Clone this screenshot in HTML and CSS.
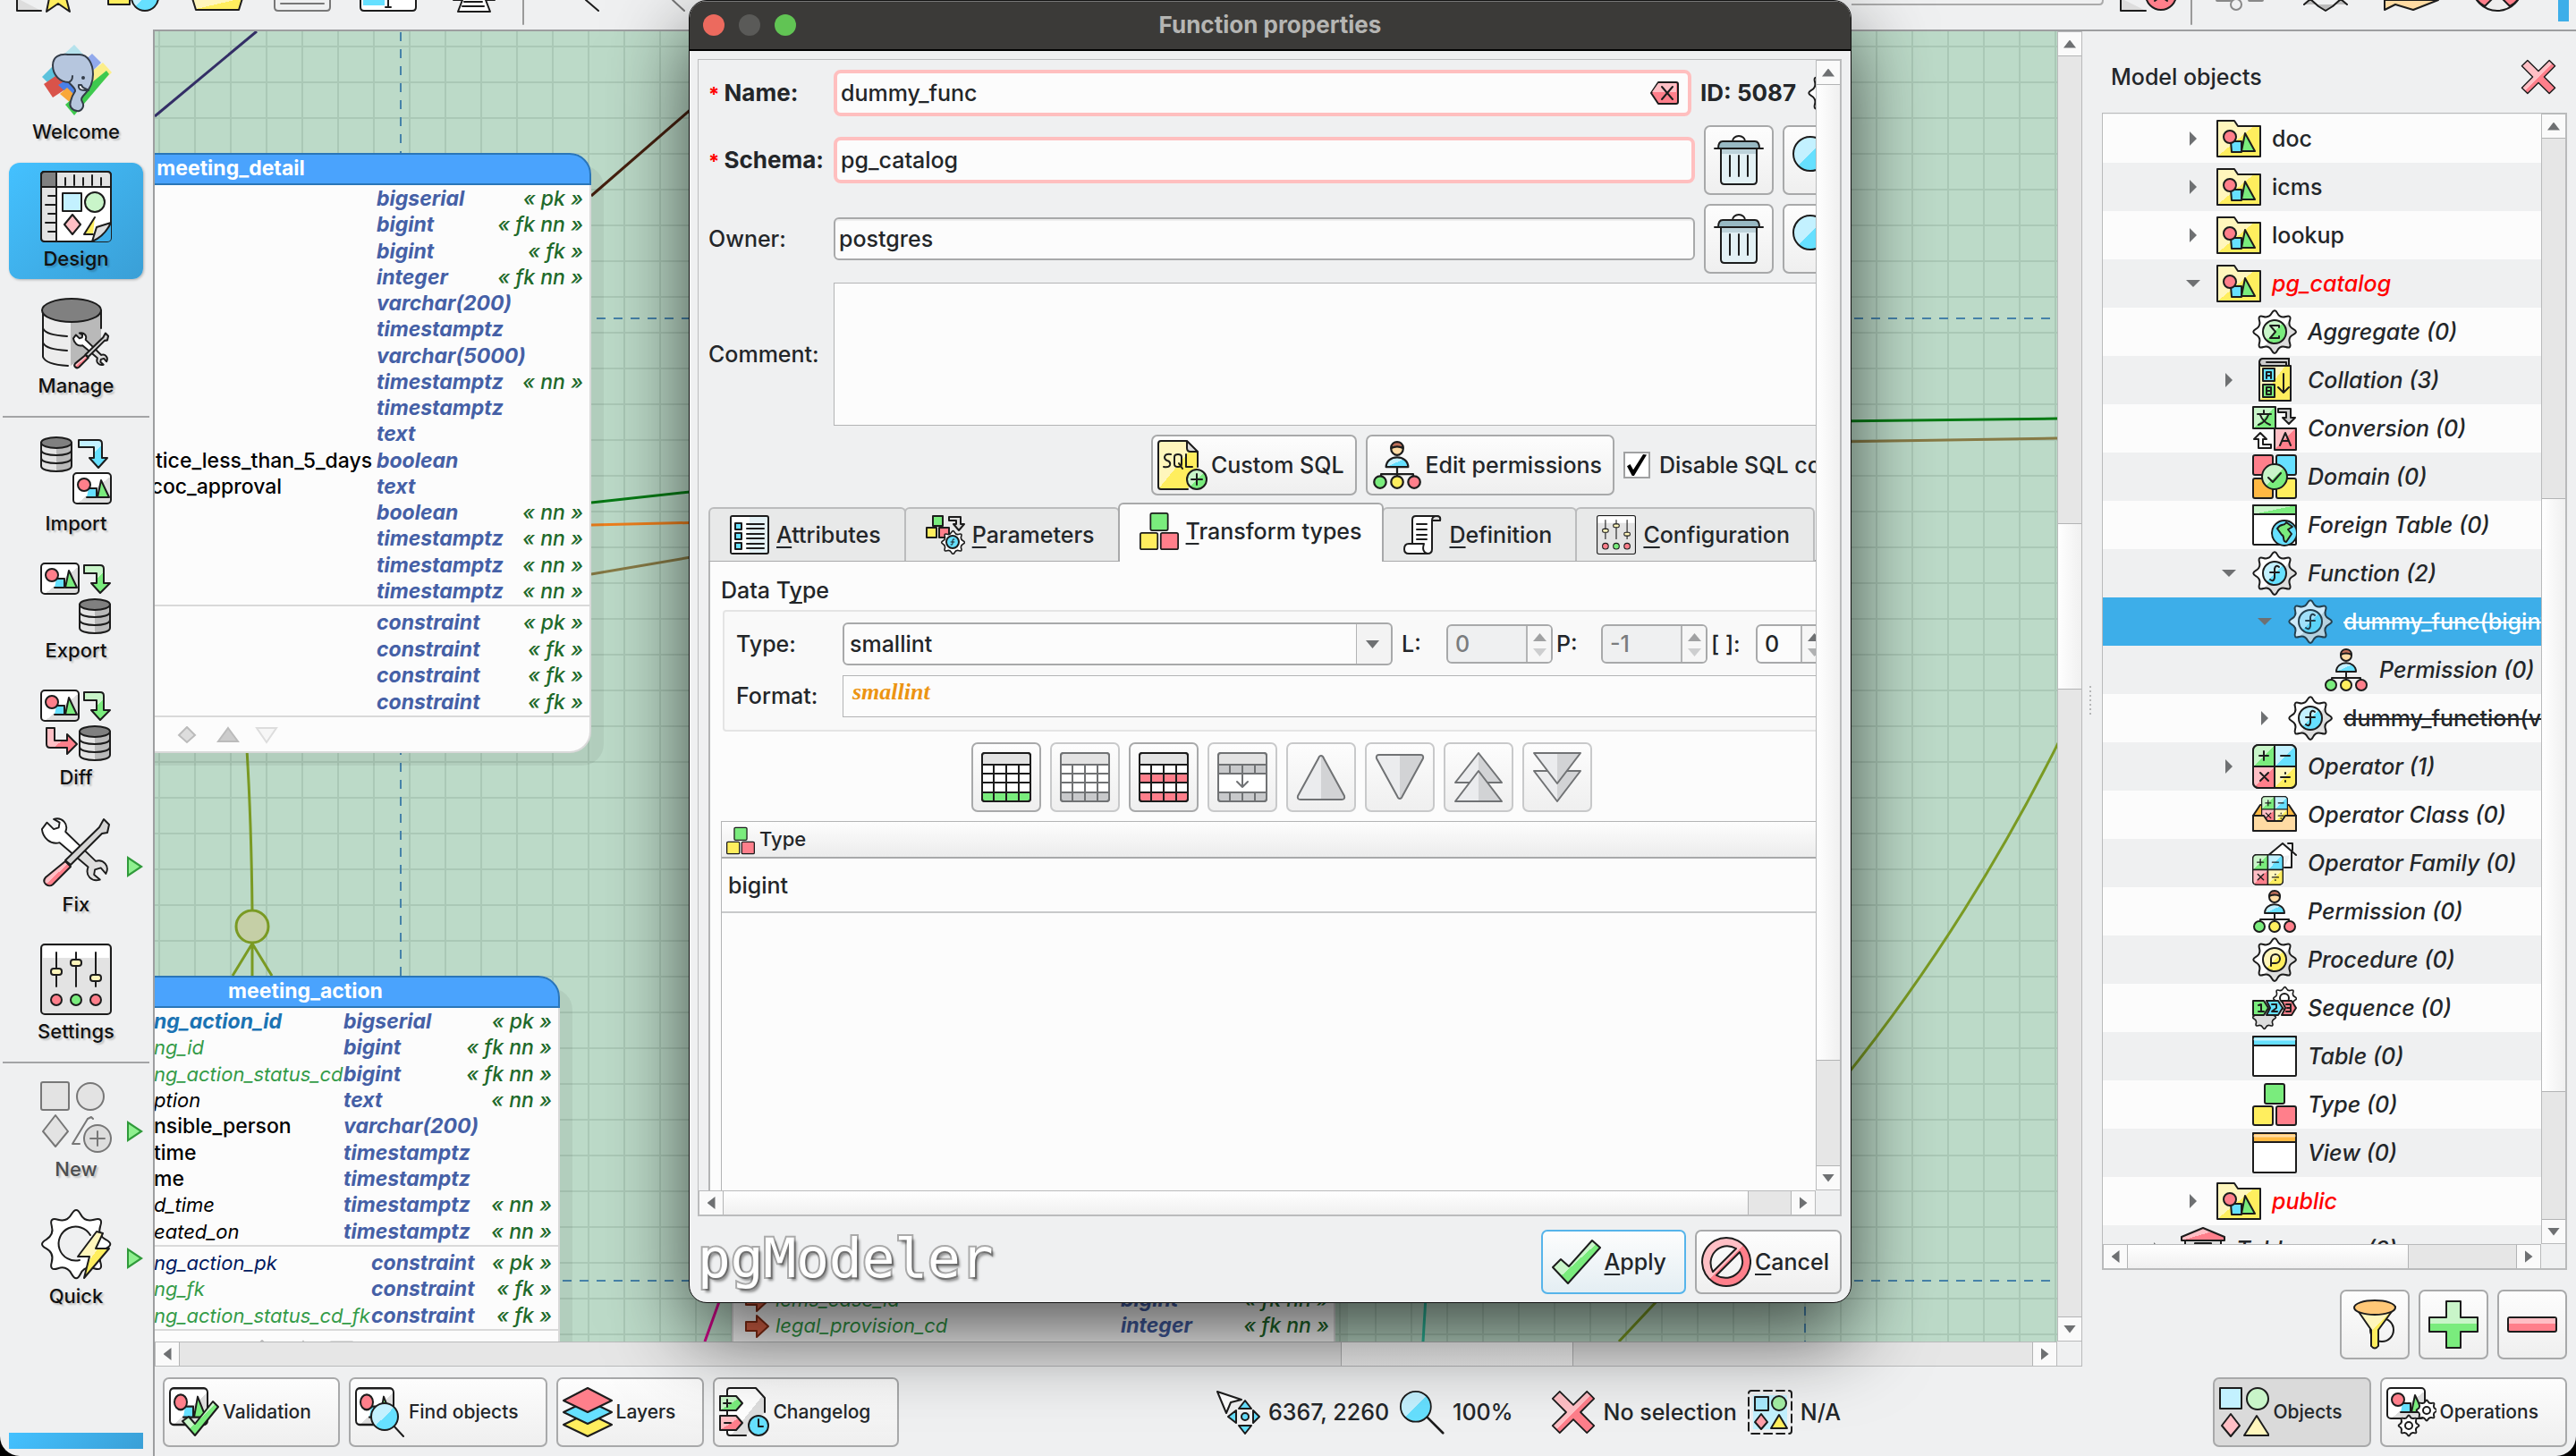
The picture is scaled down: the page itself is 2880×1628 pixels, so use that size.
FILE: index.html
```html
<!DOCTYPE html>
<html lang="en">
<head>
<meta charset="utf-8">
<title>pgModeler</title>
<link rel="stylesheet" href="styles.css">
</head>
<body>
<svg class="defs" aria-hidden="true">
  <defs>
    <linearGradient id="gG" x1="0" y1="0" x2="1" y2="1"><stop offset=".5" stop-color="#c9f5c9"/><stop offset=".5" stop-color="#7aec7d"/></linearGradient>
    <linearGradient id="gR" x1="0" y1="0" x2="1" y2="1"><stop offset=".5" stop-color="#ffbfc5"/><stop offset=".5" stop-color="#ff7f8b"/></linearGradient>
    <linearGradient id="gB" x1="0" y1="0" x2="1" y2="1"><stop offset=".5" stop-color="#c3f1ff"/><stop offset=".5" stop-color="#66e0ff"/></linearGradient>
    <linearGradient id="gY" x1="0" y1="0" x2="1" y2="1"><stop offset=".5" stop-color="#fff6bc"/><stop offset=".5" stop-color="#ffee5e"/></linearGradient>
    <linearGradient id="gW" x1="0" y1="0" x2="1" y2="1"><stop offset=".55" stop-color="#fff"/><stop offset=".55" stop-color="#dedede"/></linearGradient>
    <linearGradient id="gN" x1="0" y1="0" x2="1" y2="0"><stop offset=".5" stop-color="#ebecee"/><stop offset=".5" stop-color="#d2d3d5"/></linearGradient>
    <linearGradient id="gD" x1="0" y1="0" x2="1" y2="0"><stop offset=".5" stop-color="#e3e3e3"/><stop offset=".5" stop-color="#b9b9b9"/></linearGradient>

    <g id="card">
      <rect x="1" y="1" width="42" height="34" rx="4" fill="url(#gW)"/>
      <path d="M18 18h9v10h-11" fill="#66e0ff"/>
      <path d="M32 9l9 19h-13z" fill="#7aec7d"/>
      <circle cx="13" cy="14" r="7" fill="#ff7f8b"/>
    </g>
    <g id="cyl">
      <path d="M1 8v26c0 4 8 6 17 6s17-2 17-6V8z" fill="url(#gD)"/>
      <path d="M1 16c0 4 8 6 17 6s17-2 17-6M1 25c0 4 8 6 17 6s17-2 17-6"/>
      <ellipse cx="18" cy="8" rx="17" ry="6" fill="#808080"/>
    </g>
    <path id="gear" d="M45.9 28.1Q39.8 31.1 42 37.6T37.6 42 28.1 45.9 21.9 45.9 12.4 42 8 37.6 4.1 28.1 4.1 21.9 8 12.4 12.4 8 21.9 4.1 28.1 4.1 37.6 8 42 12.4 45.9 21.9 45.9 28.1Z"/>
    <g id="perm">
      <path d="M25 28v5M9 38v-4h32v4M25 33v5"/>
      <circle cx="25" cy="9" r="6" fill="#ffdba3"/><path d="M19 8c0-8 12-8 12 0q-6-3-12 0z" fill="#c0705a"/>
      <path d="M14 27c0-13 22-13 22 0z" fill="url(#gB)"/>
      <circle cx="8" cy="42" r="6" fill="#7aec7d"/><circle cx="25" cy="42" r="6" fill="#ffee5e"/><circle cx="42" cy="42" r="6" fill="#ff7f8b"/>
    </g>
    <g id="calc">
      <rect x="1" y="1" width="48" height="48" rx="6" fill="#fff"/>
      <path d="M25 1H7a6 6 0 0 0-6 6v18h24z" fill="url(#gG)"/><path d="M25 1h18a6 6 0 0 1 6 6v18H25z" fill="url(#gB)"/>
      <path d="M25 49H7a6 6 0 0 1-6-6V25h24z" fill="url(#gR)"/><path d="M25 49h18a6 6 0 0 0 6-6V25H25z" fill="url(#gY)"/>
      <path d="M8 13h10M13 8v10M32 13h10M9 32l9 9M18 32l-9 9M32 37h10M37 32v1M37 41v1"/>
    </g>
    <g id="tools">
      <path d="M8 6l8 8 6-2 1-6-7-4c10-3 18 6 14 15l36 35c9-3 17 6 12 15l-6-7-7 2-1 6 7 6c-10 3-18-5-14-15L23 30C12 33 3 24 2 14z" transform="translate(0 1) scale(.94)" fill="url(#gW)"/>
      <path d="M66 12l5-9 6 6-2 9-6 1-35 35-6-5z" fill="#d5d5d5"/>
      <path d="M28 50l6 6-20 20c-5 4-13-2-8-8z" fill="url(#gR)"/>
    </g>
    <g id="tgrid">
      <rect x="1" y="1" width="54" height="54" rx="3" fill="#fff"/>
      <path d="M1 4a3 3 0 0 1 3-3h48a3 3 0 0 1 3 3v10H1z" fill="#e3e3e3"/>
    </g>
  </defs>

  <symbol id="i-folder" viewBox="0 0 50 50"><path d="M1 5h19l4 6h25v34H1z" fill="url(#gY)"/><path d="M16 28h12v12H17z" fill="#66e0ff"/><path d="M32 19l11 20H28z" fill="#7aec7d"/><circle cx="15" cy="23" r="7" fill="#ff7f8b"/></symbol>
  <symbol id="i-agg" viewBox="0 0 50 50"><use href="#gear" fill="url(#gW)"/><circle cx="25" cy="25" r="13" fill="url(#gG)"/><path d="M30 20v-2H20l6 7-6 7h10v-2"/></symbol>
  <symbol id="i-func" viewBox="0 0 50 50"><use href="#gear" fill="url(#gW)"/><circle cx="25" cy="25" r="13" fill="url(#gB)"/><path d="M30 18q-4-3-5 2v10q-1 5-5 2M20 24h10"/></symbol>
  <symbol id="i-proc" viewBox="0 0 50 50"><use href="#gear" fill="url(#gW)"/><circle cx="25" cy="25" r="13" fill="url(#gY)"/><path d="M21 32v-8a5 5 0 1 1 5 5h-4"/></symbol>
  <symbol id="i-coll" viewBox="0 0 50 50"><path d="M8 6c0-3 1-5 4-5h29v8h2v39H8z" fill="url(#gY)"/><path d="M8 6c0-3 1-5 4-5h29v8H10z" fill="#ccc"/><path d="M16 5h22v4"/><rect x="12" y="12" width="13" height="14" fill="#66e0ff"/><rect x="12" y="30" width="13" height="14" fill="#7aec7d"/><path d="M16 23v-7h5v7M16 20h5M16 33h5v4h-5zM16 37h5v4h-5z"/><path d="M35 18v20M29 33l6 6 6-6"/></symbol>
  <symbol id="i-conv" viewBox="0 0 50 50"><rect x="1" y="1" width="25" height="24" fill="url(#gG)"/><rect x="25" y="25" width="24" height="24" fill="url(#gR)"/><path d="M6 9h15M13 5v4M9 10q3 8 11 11M18 10q-3 8-11 11M31 44l6-14 6 14M33 39h8"/><path d="M29 3h14v10h5l-7 7-7-7h4V7h-9z" fill="#ccc"/><path d="M21 47H7V37H2l7-7 7 7h-4v6h9z" fill="#fff"/></symbol>
  <symbol id="i-dom" viewBox="0 0 50 50"><rect x="1" y="1" width="22" height="22" rx="2" fill="#ff7f8b"/><rect x="27" y="1" width="22" height="22" rx="2" fill="#66e0ff"/><rect x="1" y="27" width="22" height="22" rx="2" fill="#ffb943"/><rect x="27" y="27" width="22" height="22" rx="2" fill="#ffee5e"/><circle cx="25" cy="25" r="14" fill="url(#gG)"/><path d="M18 26l5 5 9-10"/></symbol>
  <symbol id="i-ftab" viewBox="0 0 50 50"><rect x="1" y="3" width="48" height="44" rx="1" fill="#fff"/><rect x="1" y="3" width="48" height="10" fill="url(#gG)"/><circle cx="36" cy="34" r="14" fill="#66e0ff"/><path d="M28 29c4-7 8-2 10-7l7 5-5 3 4 5-6 9c-5 0-1-7-5-8z" fill="#7aec7d"/></symbol>
  <symbol id="i-oper" viewBox="0 0 50 50"><use href="#calc"/></symbol>
  <symbol id="i-opc" viewBox="0 0 50 50"><path d="M1 26l8-12h32l8 12" fill="#ffb943"/><use href="#calc" transform="translate(10 4) scale(.6)"/><path d="M1 26h12l4 6h16l4-6h12v17H1z" fill="#ffdba3"/></symbol>
  <symbol id="i-opf" viewBox="0 0 50 50"><path d="M16 18L34 3l15 13M44 13v17h-8M40 3h5v8" fill="#fff"/><use href="#calc" transform="translate(0 15) scale(.7)"/></symbol>
  <symbol id="i-perm" viewBox="0 0 50 50"><use href="#perm"/></symbol>
  <symbol id="i-seq" viewBox="0 0 50 50"><use href="#gear" fill="#fff" transform="translate(23 1) scale(.54)" stroke-width="3"/><circle cx="36" cy="14" r="5"/><use href="#gear" fill="#ddd" transform="translate(0 22) scale(.54)" stroke-width="3"/><path d="M1 17h12l5 8-5 8H1z" fill="#7aec7d"/><path d="M16 17h13l5 8-5 8H16l4-8z" fill="#66e0ff"/><path d="M33 17h11l5 8-5 8H33l4-8z" fill="#ff7f8b"/><path d="M7 22l3-1v8M7 29h6M22 21h5v4l-5 4h6M38 21h5v8h-5M39 25h4"/></symbol>
  <symbol id="i-tab" viewBox="0 0 50 50"><rect x="1" y="3" width="48" height="44" rx="1" fill="#fff"/><rect x="1" y="3" width="48" height="10" fill="#66e0ff"/><path d="M3 6h44" stroke="#c3f1ff" stroke-width="3"/></symbol>
  <symbol id="i-view" viewBox="0 0 50 50"><rect x="1" y="3" width="48" height="44" rx="1" fill="#fff"/><rect x="1" y="3" width="48" height="10" fill="#ffb943"/><path d="M3 6h44" stroke="#ffdba3" stroke-width="3"/></symbol>
  <symbol id="i-type" viewBox="0 0 50 50"><rect x="14" y="2" width="22" height="22" rx="2" fill="#7aec7d"/><rect x="1" y="27" width="22" height="21" rx="2" fill="#ffee5e"/><rect x="27" y="27" width="22" height="21" rx="2" fill="#ff7f8b"/></symbol>
  <symbol id="i-tsp" viewBox="0 0 50 50"><path d="M5 11v39h40V11" fill="#ddd"/><path d="M1 11L25 1l24 10v4H1z" fill="url(#gR)"/><rect x="16" y="18" width="18" height="20" fill="#66e0ff"/></symbol>

  <symbol id="i-trash" viewBox="0 0 56 56"><path d="M21 7a7 6 0 0 1 14 0"/><path d="M8 15h40v36q0 4-4 4H12q-4 0-4-4z" fill="#e3f1f5"/><path d="M9 16h38v5H9z" fill="#bdd3da" stroke="none"/><path d="M5 15c0-5 1-8 5-8h36c4 0 5 3 5 8z" fill="#98b9c3"/><path d="M1 15h54M18 23v23M28 23v23M38 23v23"/></symbol>
  <symbol id="i-lens" viewBox="0 0 56 56"><path d="M34 34l20 20" stroke-width="3"/><circle cx="20" cy="21" r="19" fill="url(#gB)"/></symbol>
  <symbol id="i-x" viewBox="0 0 56 56"><path d="M11 2l17 17L45 2l9 9-17 17 17 17-9 9-17-17-17 17-9-9 17-17L2 11z" fill="url(#gR)"/></symbol>
  <symbol id="i-check" viewBox="0 0 56 56"><path d="M2 34l9-9 9 8L46 4l9 8-36 40z" fill="url(#gG)"/></symbol>
  <symbol id="i-no" viewBox="0 0 56 56"><path fill-rule="evenodd" d="M28 1a27 27 0 1 0 .1 0zM39 13L13 39c-9-17 8-36 26-26zM43 17L17 43c17 10 37-8 26-26z" fill="url(#gR)"/></symbol>
  <symbol id="i-sql" viewBox="0 0 56 56"><path d="M34 55H4q-3 0-3-3V4q0-3 3-3h28l13 13v16" fill="url(#gY)"/><path d="M33 1v8q0 4 4 4h8z" fill="#ddd"/><path d="M15 16q-6-1-7 3 0 3 3 4 4 1 3 5-1 3-7 2M19 19q0-3 4-3t4 3v8q0 3-4 3t-4-3zM24 26l4 6M32 16v14h7"/><circle cx="44" cy="44" r="11" fill="url(#gG)"/><path d="M44 38v12M38 44h12"/></symbol>
  <symbol id="i-attr" viewBox="0 0 44 44"><rect x="1" y="1" width="42" height="42" rx="2" fill="#e3f1f5"/><path d="M2 2h20v40H2z" fill="#fff" stroke="none"/><path d="M6 9h7v7H6zM6 20h7v7H6zM6 31h7v7H6z" fill="#66e0ff"/><path d="M19 10h19M19 15h19M19 21h19M19 26h19M19 32h19M19 37h19"/></symbol>
  <symbol id="i-para" viewBox="0 0 44 44"><rect x="8" y="1" width="11" height="11" fill="#7aec7d"/><rect x="1" y="14" width="11" height="11" fill="#ffee5e"/><rect x="15" y="14" width="11" height="11" fill="#ff7f8b"/><path d="M26 2h13v8h4l-6 7-6-7h3V6h-8z" fill="#ddd"/><use href="#gear" transform="translate(17 17) scale(.54)" fill="#fff" stroke-width="3"/><circle cx="30" cy="30" r="7" fill="#66e0ff"/><path d="M32 27q-2-1-2 1v4q0 2-2 1M28 30h4" stroke-width="1"/></symbol>
  <symbol id="i-scr" viewBox="0 0 44 44"><path d="M10 32V5q0-4 4-4h24q4 0 3 5h-9v32q0 5-5 5H6q-5 0-5-5 0-6 5-6h17q-3 9 4 11" fill="#fff"/><path d="M32 6q0-5 5-5t4 5z" fill="#ddd"/><path d="M15 10h11M15 16h11M15 22h11M15 27h11"/></symbol>
  <symbol id="i-conf" viewBox="0 0 80 80"><rect x="1" y="1" width="78" height="78" rx="4" fill="#e3e3e3"/><path d="M3 3h74v13H3z" fill="#fff" stroke="none"/><path d="M18 10v38M40 10v38M62 10v38"/><rect x="12" y="28" width="12" height="7" rx="3" fill="#fff6bc"/><rect x="34" y="18" width="12" height="7" rx="3" fill="#fff6bc"/><rect x="56" y="35" width="12" height="7" rx="3" fill="#fff6bc"/><circle cx="18" cy="63" r="6" fill="#ff7f8b"/><circle cx="40" cy="63" r="6" fill="#7aec7d"/><circle cx="62" cy="63" r="6" fill="#ff7f8b"/></symbol>
  <symbol id="i-tadd" viewBox="0 0 56 56"><use href="#tgrid"/><path d="M1 45h54v7q0 3-3 3H4q-3 0-3-3z" fill="#7aec7d"/><path d="M1 14h54M1 24h54M1 34h54M14 14v41M28 14v41M42 14v41"/></symbol>
  <symbol id="i-tedit" viewBox="0 0 56 56"><use href="#tgrid"/><path d="M1 45h54v7q0 3-3 3H4q-3 0-3-3z" fill="#c8c9cb"/><path d="M1 14h54M1 24h54M1 34h54M14 14v41M28 14v41M42 14v41"/></symbol>
  <symbol id="i-tdel" viewBox="0 0 56 56"><use href="#tgrid"/><path d="M1 45h54v7q0 3-3 3H4q-3 0-3-3zM1 24h54v10H1z" fill="#ff7f8b"/><path d="M1 14h54M14 14v41M28 14v41M42 14v41"/></symbol>
  <symbol id="i-tres" viewBox="0 0 56 56"><use href="#tgrid"/><path d="M1 45h54v7q0 3-3 3H4q-3 0-3-3zM1 14h54v10H1z" fill="#c8c9cb"/><path d="M14 14v10M28 14v25M42 14v10M14 45v10M28 45v10M42 45v10M22 33l6 6 6-6"/></symbol>
  <symbol id="i-up" viewBox="0 0 56 56"><path d="M28 4q2 0 3 3l23 42q1 4-3 4H5q-4 0-3-4L25 7q1-3 3-3z" fill="url(#gN)"/></symbol>
  <symbol id="i-down" viewBox="0 0 56 56"><path d="M28 52q2 0 3-3L54 7q1-4-3-4H5q-4 0-3 4l23 42q1 3 3 3z" fill="url(#gN)"/></symbol>
  <symbol id="i-upup" viewBox="0 0 56 56"><path d="M28 1l26 33H2z" fill="url(#gN)"/><path d="M28 21l26 34H2z" fill="url(#gN)"/></symbol>
  <symbol id="i-dndn" viewBox="0 0 56 56"><path d="M28 55L2 21h52z" fill="url(#gN)"/><path d="M28 35L2 1h52z" fill="url(#gN)"/></symbol>
  <symbol id="i-clear" viewBox="0 0 32 26"><path d="M9 1h20q2 0 2 2v20q0 2-2 2H9L1 13z" fill="#ff7f8b"/><path d="M9 2h20v10H2z" fill="#ffbfc5" stroke="none"/><path d="M13 6l12 14M25 6L13 20"/></symbol>
  <symbol id="i-filt" viewBox="0 0 56 56"><circle cx="36" cy="34" r="13"/><path d="M6 8l18 26v18q4 5 8 0V34L51 8z" fill="url(#gY)"/><ellipse cx="28" cy="9" rx="23" ry="8" fill="#ffc877"/></symbol>
  <symbol id="i-plus" viewBox="0 0 56 56"><path d="M20 2h16v18h19v16H36v18H20V36H1V20h19z" fill="#7aec7d"/><path d="M21 3h14v18h19v6H2v-6h19z" fill="#c9f5c9" stroke="none"/></symbol>
  <symbol id="i-minus" viewBox="0 0 56 56"><rect x="1" y="20" width="54" height="16" rx="2" fill="#ff7f8b"/><path d="M2 21h52v6H2z" fill="#ffbfc5" stroke="none"/></symbol>
  <symbol id="i-objs" viewBox="0 0 56 56"><rect x="1" y="1" width="24" height="23" fill="#c3f1ff"/><circle cx="43" cy="13" r="12" fill="#c9f5c9"/><path d="M13 30l10 13-10 12L3 43z" fill="#ffbfc5"/><path d="M42 32l14 22H28z" fill="#fff6bc"/></symbol>
  <symbol id="i-ops" viewBox="0 0 56 56"><use href="#card"/><use href="#gear" transform="translate(33 14) scale(.48)" fill="#fff" stroke-width="4"/><use href="#gear" transform="translate(13 31) scale(.48)" fill="#fff" stroke-width="4"/><circle cx="45" cy="26" r="4"/><circle cx="25" cy="43" r="4"/></symbol>
  <symbol id="i-valid" viewBox="0 0 56 56"><use href="#card" transform="scale(1 1.2)"/><path d="M15 38l7-5 7 8 20-25 6 6-26 32z" fill="url(#gG)"/></symbol>
  <symbol id="i-find" viewBox="0 0 56 56"><use href="#card" transform="scale(1 1.2)"/><path d="M42 42l12 13"/><circle cx="33" cy="33" r="15" fill="url(#gB)"/></symbol>
  <symbol id="i-layers" viewBox="0 0 56 56"><path d="M28 29l27 13-27 13L1 42z" fill="#ffee5e"/><path d="M28 15l27 13-27 13L1 28z" fill="#66e0ff"/><path d="M28 1l27 14-27 13L1 15z" fill="#ff7f8b"/></symbol>
  <symbol id="i-clog" viewBox="0 0 56 56"><path d="M30 54H12q-3 0-3-3V4q0-3 3-3h29l10 11v16" fill="url(#gW)"/><path d="M1 10h18l7 8-7 8H1z" fill="url(#gG)"/><path d="M1 32h18l7 8-7 8H1z" fill="url(#gR)"/><path d="M9 14v8M5 18h8M6 40h7"/><circle cx="44" cy="43" r="11" fill="#66e0ff"/><path d="M44 36v8h5"/></symbol>
  <symbol id="i-pos" viewBox="0 0 50 50"><path d="M2 2l27 9-12 3-5 12z" fill="#fff"/><g fill="#66e0ff"><path d="M33 12l7 9H26zM33 49l7-9H26zM14 30l9-7v14zM49 30l-7-7v14z"/><circle cx="33" cy="30" r="4"/></g></symbol>
  <symbol id="i-sel" viewBox="0 0 50 50"><rect x="6" y="6" width="38" height="38" fill="#c3f1ff" stroke="none"/><rect x="1" y="1" width="48" height="48" rx="3" stroke-dasharray="9 5"/><rect x="8" y="8" width="15" height="15" fill="#a8ebff"/><circle cx="35" cy="15" r="8" fill="#a3eea3"/><path d="M15 27l7 9-7 8-7-8z" fill="#ff9fa9"/><path d="M35 28l9 15H26z" fill="#ffee5e"/></symbol>

  <symbol id="i-welcome" viewBox="0 0 80 80"><g stroke="none"><path d="M24 14L38 1l12 13-14 12z" fill="#b5e2ec"/><path d="M48 20l10-9 10 10-9 9z" fill="#92a9ec"/><path d="M54 34l16-13 10 11-21 21z" fill="#fcee8a"/><path d="M2 37l12-12 14 14-12 12z" fill="#5cc2dc"/><path d="M4 45l16-11 14 13-20 13z" fill="#d9534a"/><path d="M20 46l10-6 14 12-9 8z" fill="#4a80e8"/><path d="M22 56l8-7 12 12-7 6z" fill="#f9a73a"/><path d="M28 68l8-7 38-31 3 4-39 46z" fill="#3ec94e"/></g><g stroke="#333c48"><path d="M44 12c9 0 15 10 15 22 0 9-3 16-9 22-4 4-5 6-3 9 3 5-1 11-6 10-6-1-9-5-7-11 1-5 3-8 5-11 1-3-5-7-7-10-10 0-18-8-18-19 0-10 8-13 17-12z" fill="#b6c6de"/><path d="M32 43q4-2 4-7M43 46c-1 7 6 6 11 6-3-2-7-2-8-6z" fill="#fff"/><circle cx="48" cy="38" r="1"/></g></symbol>
  <symbol id="i-design" viewBox="0 0 80 80"><rect x="1" y="1" width="78" height="78" rx="4" fill="#fff"/><path d="M1 18V5q0-4 4-4h70q4 0 4 4v13z" fill="#e3e3e3"/><path d="M1 18h17v61H5q-4 0-4-4z" fill="#e3e3e3"/><path d="M1 18V5q0-4 4-4h13v17z" fill="#808080"/><path d="M18 1v78M1 18h78M28 8v8M38 5v11M48 8v8M58 5v11M68 8v8M9 28h8M6 38h11M9 48h8M6 58h11M9 68h8"/><rect x="25" y="25" width="21" height="20" fill="#c3f1ff"/><circle cx="61" cy="35" r="11" fill="#c9f5c9"/><path d="M36 49l9 11-9 11-9-11z" fill="#ffbfc5"/><path d="M61 52L49 71h10" fill="#ffee5e"/><path d="M58 79l5-16 16-5v17q0 4-4 4z" fill="#3daee9" stroke="none"/><path d="M58 79l5-16 16-5q-7 15-21 21z" fill="#ddd"/></symbol>
  <symbol id="i-manage" viewBox="0 0 80 80"><path d="M3 14v52c0 6 14 10 31 10V34z" fill="#ececec" stroke="none"/><path d="M34 20h34v30L34 76z" fill="#b9b9b9" stroke="none"/><path d="M68 14v20M3 14v52c2 6 12 9 28 10M3 34c2 6 12 8 27 9M3 50c2 6 12 8 27 9"/><ellipse cx="35" cy="14" rx="33" ry="13" fill="#808080"/><use href="#tools" transform="translate(36 38) scale(.52)" stroke-width="4"/></symbol>
  <symbol id="i-import" viewBox="0 0 80 80"><use href="#cyl"/><path d="M43 5h22q4 0 4 4v16h6L65 36 55 25h5V13H43z" fill="url(#gB)"/><use href="#card" transform="translate(36 41)"/></symbol>
  <symbol id="i-export" viewBox="0 0 80 80"><use href="#card"/><path d="M49 3h18q4 0 4 4v16h7L67 34 57 23h6V12H49z" fill="url(#gG)"/><use href="#cyl" transform="translate(43 39)"/></symbol>
  <symbol id="i-diff" viewBox="0 0 80 80"><use href="#card"/><path d="M49 3h18q4 0 4 4v16h7L67 34 57 23h6V12H49z" fill="url(#gG)"/><path d="M7 43h9v14h14v-7l11 11-11 11v-7H11q-4 0-4-4z" fill="url(#gR)"/><use href="#cyl" transform="translate(43 39)"/></symbol>
  <symbol id="i-fix" viewBox="0 0 80 80"><use href="#tools"/></symbol>
  <symbol id="i-new" viewBox="0 0 80 80"><rect x="1" y="1" width="31" height="31" rx="2" fill="#e3e3e3"/><circle cx="56" cy="17" r="15" fill="#e3e3e3"/><path d="M17 38l14 18-14 17L3 56z" fill="#e3e3e3"/><path d="M53 42l4-2M53 42L36 70h8M57 40l2 2"/><circle cx="64" cy="64" r="15" fill="#ddd"/><path d="M64 56v16M56 64h16"/></symbol>
  <symbol id="i-quick" viewBox="0 0 80 80"><use href="#gear" transform="scale(1.6)" fill="#fff" stroke-width="1.25"/><path d="M56 30a19 19 0 1 0-12 28" fill="#eff0f1"/><path d="M63 26L42 54h13l-6 24 28-33H62l8-17z" fill="url(#gY)"/></symbol>
</svg>

<div class="app">
  <header class="toolbar">
    <svg class="ic tools-left" viewBox="0 0 770 32">
      <path d="M19-2v14h27" fill="#ddd"/><path d="M55-2L52 13l13-9 13 9-4-15z" fill="#ffee5e"/>
      <path d="M121-2v7h24v-7" fill="#ffee5e"/><circle cx="162" cy="-3" r="15" fill="url(#gB)"/>
      <path d="M215-2l4 13h48l4-13" fill="url(#gY)"/>
      <path d="M307-2v10q0 4 4 4h54q4 0 4-4V-2M314 4h48" stroke="#777"/>
      <path d="M403-2v10q0 4 4 4h54q4 0 4-4V-2" fill="#fff"/><path d="M406 0h24v6h-24z" fill="#66e0ff" stroke="none"/><path d="M434 0v8M431 8h6"/>
      <path d="M507 0h10l-5 13h36l-5-13h10M519 2h20M517 7h24" fill="#fff"/>
      <path d="M585-4v31" stroke="#9a9a9a"/><path d="M655 0l14 12"/><path d="M752 0l13 12" stroke="#777"/>
    </svg>
    <svg class="ic tools-right" viewBox="2070 0 810 32">
      <path d="M2060 5h287q4 0 4-5" stroke="#aaa"/>
      <path d="M2371-2v14h28" fill="#ddd"/><circle cx="2416" cy="-6" r="17" fill="#ff7f8b"/><path d="M2409 1l7-5 7 5"/>
      <path d="M2450-4v31" stroke="#9a9a9a"/>
      <path d="M2479 0h14M2515 0h14" stroke="#888" stroke-width="4"/><circle cx="2500" cy="5" r="6" stroke="#888"/>
      <path d="M2576 5l7-6 9 8 8 5 8-5 9-8 7 6" fill="#bbb"/>
      <path d="M2666 11l12-6 20 6 28-11h-60z" fill="#ffdba3"/><path d="M2690 0h20"/>
      <circle cx="2792" cy="-16" r="28" fill="#eee"/><path d="M2768-2q4 6 10 9l8-8M2816-2q-4 6-10 9l-8-8" fill="#ff7f8b"/>
      <path d="M2860 0h12v24h-12z" fill="#3daee9" stroke="none"/>
    </svg>
  </header>

  <nav class="side">
    <button class="nav"><svg class="ic"><use href="#i-welcome"/></svg>Welcome</button>
    <button class="nav active"><svg class="ic"><use href="#i-design"/></svg>Design</button>
    <button class="nav"><svg class="ic"><use href="#i-manage"/></svg>Manage</button>
    <hr>
    <button class="nav"><svg class="ic"><use href="#i-import"/></svg>Import</button>
    <button class="nav"><svg class="ic"><use href="#i-export"/></svg>Export</button>
    <button class="nav"><svg class="ic"><use href="#i-diff"/></svg>Diff</button>
    <button class="nav more"><svg class="ic"><use href="#i-fix"/></svg>Fix</button>
    <button class="nav"><svg class="ic"><use href="#i-conf"/></svg>Settings</button>
    <hr>
    <button class="nav more off"><svg class="ic"><use href="#i-new"/></svg>New</button>
    <button class="nav more"><svg class="ic"><use href="#i-quick"/></svg>Quick</button>
    <div class="sidebar-mark"></div>
  </nav>

  <main class="work">
    <section class="center">
      <div class="view">
        <div class="canvas">
          <svg class="wires" viewBox="173 35 2127 1465" width="2127" height="1465">
            <g stroke="#4682a9" stroke-width="2" stroke-dasharray="10 9"><path d="M448 36V1500M2018 36V1500M173 356H2300M173 1432H2300"/></g>
            <path d="M287 35L173 130" stroke="#332e66"/>
            <path d="M661 219L790 107" stroke="#45200f"/>
            <path d="M661 562L790 548M2050 471L2300 468" stroke="#067a14"/>
            <path d="M661 587L790 584" stroke="#ee7f1c"/>
            <path d="M661 642L790 620M2050 494L2300 490" stroke="#877a45"/>
            <path d="M276 838Q281 920 282 1018M282 1055v36M282 1055l-22 36M282 1055l22 36M2302 829Q2196 1040 2060 1208M1870 1436L1810 1500" stroke="#7a9a23"/>
            <circle cx="282" cy="1036" r="18" stroke="#7a9a23" fill="#c5cfa6"/>
            <path d="M806 1450L788 1500" stroke="#d6008c"/>
            <path d="M1594 1450L1591 1500" stroke="#2bb99b"/>
          </svg>

          <article class="ent ent-detail">
            <h3>meeting_detail</h3>
            <div class="cols">
              <p><b>bigserial</b><i>« pk »</i></p>
              <p><b>bigint</b><i>« fk nn »</i></p>
              <p><b>bigint</b><i>« fk »</i></p>
              <p><b>integer</b><i>« fk nn »</i></p>
              <p><b>varchar(200)</b></p>
              <p><b>timestamptz</b></p>
              <p><b>varchar(5000)</b></p>
              <p><b>timestamptz</b><i>« nn »</i></p>
              <p><b>timestamptz</b></p>
              <p><b>text</b></p>
              <p><span>tice_less_than_5_days</span><b>boolean</b></p>
              <p><span class="cut">_coc_approval</span><b>text</b></p>
              <p><b>boolean</b><i>« nn »</i></p>
              <p><b>timestamptz</b><i>« nn »</i></p>
              <p><b>timestamptz</b><i>« nn »</i></p>
              <p><b>timestamptz</b><i>« nn »</i></p>
            </div>
            <div class="cons">
              <p><b>constraint</b><i>« pk »</i></p>
              <p><b>constraint</b><i>« fk »</i></p>
              <p><b>constraint</b><i>« fk »</i></p>
              <p><b>constraint</b><i>« fk »</i></p>
            </div>
            <footer><svg viewBox="0 0 120 20" width="120" height="20"><path d="M14 1l9 9-9 8-9-8z"/><path d="M60 2l11 15H49z" fill="#ccc"/><path d="M103 18l11-16H92z" stroke="#ddd" fill="#f6f6f6"/></svg></footer>
          </article>

          <article class="ent ent-action">
            <h3>meeting_action</h3>
            <div class="cols">
              <p><span class="pk">ng_action_id</span><b>bigserial</b><i>« pk »</i></p>
              <p><span class="fk">ng_id</span><b>bigint</b><i>« fk nn »</i></p>
              <p><span class="fk">ng_action_status_cd</span><b>bigint</b><i>« fk nn »</i></p>
              <p><span class="nn">ption</span><b>text</b><i>« nn »</i></p>
              <p><span>nsible_person</span><b>varchar(200)</b></p>
              <p><span>time</span><b>timestamptz</b></p>
              <p><span>me</span><b>timestamptz</b></p>
              <p><span class="nn">d_time</span><b>timestamptz</b><i>« nn »</i></p>
              <p><span class="nn">eated_on</span><b>timestamptz</b><i>« nn »</i></p>
            </div>
            <div class="cons">
              <p><span class="cpk">ng_action_pk</span><b>constraint</b><i>« pk »</i></p>
              <p><span class="fk">ng_fk</span><b>constraint</b><i>« fk »</i></p>
              <p><span class="fk">ng_action_status_cd_fk</span><b>constraint</b><i>« fk »</i></p>
            </div>
            <footer><svg viewBox="0 0 120 20" width="120" height="20"><path d="M14 1l9 9-9 8-9-8z"/><path d="M60 2l11 15H49z" fill="#ccc"/><path d="M103 18l11-16H92z" stroke="#ddd" fill="#f6f6f6"/></svg></footer>
          </article>

          <article class="ent ent-case">
            <p><svg class="ic" viewBox="0 0 28 28"><path d="M1 9h12V2l13 12-13 12v-7H1z" fill="#e2674a" stroke="#8a2f16"/></svg><span class="fk">icms_case_id</span><b>bigint</b><i>« fk nn »</i></p>
            <p><svg class="ic" viewBox="0 0 28 28"><path d="M1 9h12V2l13 12-13 12v-7H1z" fill="#e2674a" stroke="#8a2f16"/></svg><span class="fk">legal_provision_cd</span><b>integer</b><i>« fk nn »</i></p>
            <p><svg class="ic" viewBox="0 0 28 28"><circle cx="14" cy="14" r="9" fill="#999" stroke="#666"/></svg></p>
          </article>
        </div>
        <div class="sb v"><button aria-label="Scroll up" class="a up"></button><span class="g523"></span><span class="thumb g184"></span><span class="g702"></span><button aria-label="Scroll down" class="a dn"></button></div>
        <div class="sb h"><button aria-label="Scroll left" class="a lf"></button><span class="g1299"></span><span class="thumb g258"></span><span class="g514"></span><button aria-label="Scroll right" class="a rt"></button></div>
        <div class="corner"></div>
      </div>
      <footer class="statusbar">
        <button class="btn"><svg class="ic"><use href="#i-valid"/></svg>Validation</button>
        <button class="btn"><svg class="ic"><use href="#i-find"/></svg>Find objects</button>
        <button class="btn"><svg class="ic"><use href="#i-layers"/></svg>Layers</button>
        <button class="btn"><svg class="ic"><use href="#i-clog"/></svg>Changelog</button>
        <div class="status">
          <svg class="ic"><use href="#i-pos"/></svg><span class="s-pos">6367, 2260</span>
          <svg class="ic"><use href="#i-lens"/></svg><span class="s-zoom">100%</span>
          <svg class="ic"><use href="#i-x"/></svg><span class="s-sel">No selection</span>
          <svg class="ic"><use href="#i-sel"/></svg><span>N/A</span>
        </div>
      </footer>
    </section>

    <aside class="dock">
      <div class="dock-head"><h2>Model objects</h2><button class="plain" aria-label="Close"><svg class="ic"><use href="#i-x"/></svg></button></div>
      <div class="tree">
        <ul>
          <li class="l1 shut"><svg class="ic"><use href="#i-folder"/></svg>doc</li>
          <li class="l1 shut"><svg class="ic"><use href="#i-folder"/></svg>icms</li>
          <li class="l1 shut"><svg class="ic"><use href="#i-folder"/></svg>lookup</li>
          <li class="l1 open sys"><svg class="ic"><use href="#i-folder"/></svg>pg_catalog</li>
          <li class="l2 it"><svg class="ic"><use href="#i-agg"/></svg>Aggregate (0)</li>
          <li class="l2 it shut"><svg class="ic"><use href="#i-coll"/></svg>Collation (3)</li>
          <li class="l2 it"><svg class="ic"><use href="#i-conv"/></svg>Conversion (0)</li>
          <li class="l2 it"><svg class="ic"><use href="#i-dom"/></svg>Domain (0)</li>
          <li class="l2 it"><svg class="ic"><use href="#i-ftab"/></svg>Foreign Table (0)</li>
          <li class="l2 it open"><svg class="ic"><use href="#i-func"/></svg>Function (2)</li>
          <li class="l3 open sel"><svg class="ic"><use href="#i-func"/></svg><s>dummy_func(bigint)</s></li>
          <li class="l4 it"><svg class="ic"><use href="#i-perm"/></svg>Permission (0)</li>
          <li class="l3 shut"><svg class="ic"><use href="#i-func"/></svg><s>dummy_function(varchar)</s></li>
          <li class="l2 it shut"><svg class="ic"><use href="#i-oper"/></svg>Operator (1)</li>
          <li class="l2 it"><svg class="ic"><use href="#i-opc"/></svg>Operator Class (0)</li>
          <li class="l2 it"><svg class="ic"><use href="#i-opf"/></svg>Operator Family (0)</li>
          <li class="l2 it"><svg class="ic"><use href="#i-perm"/></svg>Permission (0)</li>
          <li class="l2 it"><svg class="ic"><use href="#i-proc"/></svg>Procedure (0)</li>
          <li class="l2 it"><svg class="ic"><use href="#i-seq"/></svg>Sequence (0)</li>
          <li class="l2 it"><svg class="ic"><use href="#i-tab"/></svg>Table (0)</li>
          <li class="l2 it"><svg class="ic"><use href="#i-type"/></svg>Type (0)</li>
          <li class="l2 it"><svg class="ic"><use href="#i-view"/></svg>View (0)</li>
          <li class="l1 shut sys"><svg class="ic"><use href="#i-folder"/></svg>public</li>
          <li class="l0 it shut"><svg class="ic"><use href="#i-tsp"/></svg>Tablespace (2)</li>
        </ul>
        <div class="sb v"><button aria-label="Scroll up" class="a up"></button><span class="g403"></span><span class="thumb g662"></span><span class="g143"></span><button aria-label="Scroll down" class="a dn"></button></div>
        <div class="sb h"><button aria-label="Scroll left" class="a lf"></button><span class="thumb g312"></span><span class="g121"></span><button aria-label="Scroll right" class="a rt"></button></div>
        <div class="corner"></div>
      </div>
      <div class="dock-row">
        <button class="btn sq" aria-label="Filter"><svg class="ic"><use href="#i-filt"/></svg></button>
        <button class="btn sq" aria-label="Expand all"><svg class="ic"><use href="#i-plus"/></svg></button>
        <button class="btn sq" aria-label="Collapse all"><svg class="ic"><use href="#i-minus"/></svg></button>
      </div>
      <div class="dock-row">
        <button class="btn on"><svg class="ic"><use href="#i-objs"/></svg>Objects</button>
        <button class="btn"><svg class="ic"><use href="#i-ops"/></svg>Operations</button>
      </div>
    </aside>
  </main>
</div>

<div class="dialog" role="dialog" aria-labelledby="dlg-title">
  <div class="titlebar"><i class="c1"></i><i class="c2"></i><i class="c3"></i><h1 id="dlg-title">Function properties</h1></div>
  <div class="dlg-body">
    <div class="area">
      <div class="port">
        <form class="form">
          <div class="row r-name"><label for="f-name" class="req">Name:</label><span class="edit must"><input id="f-name" value="dummy_func"><svg class="ic"><use href="#i-clear"/></svg></span><strong>ID: 5087</strong><svg class="ic gearic" viewBox="0 0 50 50"><use href="#gear" fill="#fff"/></svg></div>
          <div class="row r-pick"><label for="f-schema" class="req">Schema:</label><span class="edit must"><input id="f-schema" value="pg_catalog"></span><button type="button" class="btn sq" aria-label="Clear schema"><svg class="ic"><use href="#i-trash"/></svg></button><button type="button" class="btn sq" aria-label="Find schema"><svg class="ic"><use href="#i-lens"/></svg></button></div>
          <div class="row r-pick"><label for="f-owner">Owner:</label><span class="edit"><input id="f-owner" value="postgres"></span><button type="button" class="btn sq" aria-label="Clear owner"><svg class="ic"><use href="#i-trash"/></svg></button><button type="button" class="btn sq" aria-label="Find owner"><svg class="ic"><use href="#i-lens"/></svg></button></div>
          <div class="row r-comment"><label for="f-comment">Comment:</label><textarea id="f-comment"></textarea></div>
          <div class="row r-actions">
            <button type="button" class="btn big"><svg class="ic"><use href="#i-sql"/></svg>Custom SQL</button>
            <button type="button" class="btn big"><svg class="ic"><use href="#i-perm"/></svg>Edit permissions</button>
            <input type="checkbox" id="f-dis" checked><label for="f-dis">Disable SQL code</label>
          </div>
          <div class="tabs" role="tablist">
            <button type="button" role="tab"><svg class="ic"><use href="#i-attr"/></svg><span><u>A</u>ttributes</span></button>
            <button type="button" role="tab"><svg class="ic"><use href="#i-para"/></svg><span><u>P</u>arameters</span></button>
            <button type="button" role="tab" class="cur" aria-selected="true"><svg class="ic"><use href="#i-type"/></svg><span><u>T</u>ransform types</span></button>
            <button type="button" role="tab"><svg class="ic"><use href="#i-scr"/></svg><span><u>D</u>efinition</span></button>
            <button type="button" role="tab"><svg class="ic"><use href="#i-conf"/></svg><span><u>C</u>onfiguration</span></button>
          </div>
          <div class="pane">
            <h4>Data T<u>y</u>pe</h4>
            <div class="group">
              <div class="grow">
                <label for="f-type" class="gl">Type:</label>
                <span class="combo"><select id="f-type"><option>smallint</option></select></span>
                <label for="f-l" class="nl">L:</label><span class="spin dis"><input id="f-l" value="0" disabled><em></em></span>
                <label for="f-p" class="nl">P:</label><span class="spin dis"><input id="f-p" value="-1" disabled><em></em></span>
                <label for="f-d" class="nl">[ ]:</label><span class="spin short"><input id="f-d" value="0"><em></em></span>
              </div>
              <div class="grow"><span class="gl">Format:</span><output class="fmt">smallint</output></div>
            </div>
            <div class="bar">
              <button type="button" class="btn sq" aria-label="Add"><svg class="ic"><use href="#i-tadd"/></svg></button>
              <button type="button" class="btn sq" disabled aria-label="Edit"><svg class="ic"><use href="#i-tedit"/></svg></button>
              <button type="button" class="btn sq" aria-label="Remove all"><svg class="ic"><use href="#i-tdel"/></svg></button>
              <button type="button" class="btn sq" disabled aria-label="Resize"><svg class="ic"><use href="#i-tres"/></svg></button>
              <button type="button" class="btn sq" disabled aria-label="Up"><svg class="ic"><use href="#i-up"/></svg></button>
              <button type="button" class="btn sq" disabled aria-label="Down"><svg class="ic"><use href="#i-down"/></svg></button>
              <button type="button" class="btn sq" disabled aria-label="First"><svg class="ic"><use href="#i-upup"/></svg></button>
              <button type="button" class="btn sq" disabled aria-label="Last"><svg class="ic"><use href="#i-dndn"/></svg></button>
            </div>
            <div class="grid-box">
              <table>
                <thead><tr><th><svg class="ic"><use href="#i-type"/></svg>Type</th></tr></thead>
                <tbody><tr><td>bigint</td></tr></tbody>
              </table>
            </div>
          </div>
        </form>
      </div>
      <div class="sb v"><button aria-label="Scroll up" class="a up"></button><span class="thumb g1092"></span><span class="g118"></span><button aria-label="Scroll down" class="a dn"></button></div>
      <div class="sb h"><button aria-label="Scroll left" class="a lf"></button><span class="thumb g1146"></span><span class="g48"></span><button aria-label="Scroll right" class="a rt"></button></div>
      <div class="corner"></div>
    </div>
    <div class="dlg-foot">
      <span class="logo">pgModeler</span>
      <button class="btn big def"><svg class="ic"><use href="#i-check"/></svg><span><u>A</u>pply</span></button>
      <button class="btn big"><svg class="ic"><use href="#i-no"/></svg><span><u>C</u>ancel</span></button>
    </div>
  </div>
</div>
</body>
</html>
```
FILE: styles.css
```css
* { box-sizing: border-box; }
body { margin: 0; background: #000; color: #232629; font: 500 25px/32px Inter, "Liberation Sans", sans-serif; overflow: hidden; }
button, input, select, textarea { font: inherit; color: inherit; margin: 0; }
h1, h2, h3, h4, p, ul { margin: 0; padding: 0; font: inherit; }
u { text-decoration-thickness: 2px; text-underline-offset: 4px; text-decoration-skip-ink: none; }
.defs { position: absolute; width: 0; height: 0; }
.ic { fill: none; stroke: #1c1c1c; stroke-width: 2; stroke-linejoin: round; stroke-linecap: round; flex: none; }

.app { height: 100vh; display: grid; grid-template-columns: 171px 1fr; grid-template-rows: 33px 1fr; background: #eff0f1; border-radius: 0 0 22px 22px; overflow: hidden; }
.toolbar { grid-column: 1 / -1; display: flex; justify-content: space-between; }
.tools-left { width: 770px; height: 32px; }
.tools-right { width: 810px; height: 32px; }

.side { display: flex; flex-direction: column; gap: 12px; padding: 7px 11px 8px 10px; }
.side hr { width: 162px; height: 0; border: 0; margin: 0 -6px; box-shadow: 0 0 0 1px #a3a4a6; }
.nav { position: relative; height: 130px; flex: none; padding: 9px 0 0; border: 0; border-radius: 12px; background: none; display: flex; flex-direction: column; align-items: center; font-size: 22px; line-height: 36px; color: #111; text-shadow: 2px 2px 2px #0003; }
.nav .ic { width: 80px; height: 80px; }
.nav.active { background: linear-gradient(135deg, #44c1ff, #3a9fd6); box-shadow: 1px 1px 3px #0004; }
.nav.off { color: #4c4e50; }
.nav.off .ic { stroke: #777; }
.nav.more::after { content: ""; position: absolute; right: 0; top: 53px; width: 18px; height: 24px; background: #2f9a3a; clip-path: polygon(0 0, 100% 50%, 0 100%); }
.nav.more::before { content: ""; position: absolute; z-index: 1; right: 4px; top: 57px; width: 12px; height: 16px; background: #8ff08f; clip-path: polygon(0 0, 100% 50%, 0 100%); }
.sidebar-mark { margin-top: auto; height: 18px; background: linear-gradient(135deg, #44c1ff, #3a9fd6); }

.work { display: flex; min-width: 0; min-height: 0; border: solid #9d9ea0; border-width: 2px 0 0 2px; }
.center { flex: 1; min-width: 0; display: flex; flex-direction: column; }
.view { flex: 1; min-height: 0; display: grid; grid-template-columns: 1fr 28px; grid-template-rows: 1fr 28px; }
.canvas { position: relative; overflow: hidden; background: linear-gradient(90deg, #aac8b6 2px, transparent 2px) 4px 0 / 40px 40px, linear-gradient(#aac8b6 2px, transparent 2px) 0 16px / 40px 40px, #bcdac8; }
.wires { position: absolute; left: 0; top: 0; fill: none; stroke-width: 3; }

.ent { position: absolute; background: #fcfcfc; border: 2px solid #d9d9d9; border-radius: 0 24px 24px 0; box-shadow: 14px 14px 0 #0000000d; font-size: 23px; line-height: 29px; color: #000; }
.ent h3 { margin: -2px -2px 0; height: 36px; line-height: 30px; background: #4aa3fd; border: 2px solid #2a76b8; border-radius: 0 24px 0 0; color: #fff; font-weight: 700; text-align: center; }
.ent .cols, .ent .cons { display: flex; flex-direction: column; }
.ent .cols { padding-top: 1px; }
.ent .cons { border-top: 2px solid #d9d9d9; padding-top: 4px; }
.ent footer { border-top: 2px solid #d9d9d9; fill: #ddd; stroke: #bbb; stroke-width: 2; height: 40px; }
.ent p { flex: 1; display: grid; align-items: center; grid-template-columns: var(--name) 1fr auto; padding-right: 7px; white-space: nowrap; }
.ent b { grid-column: 2; font-weight: 700; font-style: italic; color: #4560a6; }
.ent i { color: #1f6a2b; }
.ent .pk { color: #1b73b3; font-weight: 700; font-style: italic; }
.ent .fk { color: #349b48; }
.ent .cpk { color: #00195f; }
.ent .fk, .ent .nn, .ent .cpk { font-style: italic; font-weight: 400; font-size: 22px; }
.ent-detail { left: -318px; top: 136px; width: 806px; --name: 564px; }
.ent-detail span { padding-left: 317px; }
.ent-detail .cut { margin-left: -16px; }
.ent-detail .cols { height: 469px; }
.ent-detail .cons { height: 124px; }
.ent-detail footer { padding: 8px 0 0 338px; }
.ent-action { left: -116px; top: 1056px; width: 569px; --name: 325px; }
.ent-action span { padding-left: 113px; }
.ent-action .cols { height: 265px; }
.ent-action .cons { height: 94px; --name: 356px; }
.ent-action footer { padding: 8px 0 0 220px; }
.ent-case { left: 645px; top: 1402px; width: 675px; border-radius: 0; }
.ent-case p { grid-template-columns: 34px 386px 1fr auto; padding: 0 5px 0 13px; height: 29px; }
.ent-case b { grid-column: 3; }
.ent-case .ic { width: 28px; height: 28px; }

.sb { display: flex; background: #e6e6e6; border: 1px solid #b9babb; }
.sb.v { flex-direction: column; }
.sb .thumb { background: linear-gradient(90deg, #fff, #f0f0f0); border: solid #b3b4b5; border-width: 1px 0; }
.sb.h .thumb { background: linear-gradient(#fff, #f0f0f0); border-width: 0 1px; }
.a { width: 26px; height: 26px; padding: 0; border: 0; background: #fafafa; flex: none; display: grid; place-items: center; }
.a::before { content: ""; width: 14px; height: 9px; background: #6e7072; clip-path: polygon(50% 0, 100% 100%, 0 100%); }
.a.dn::before { clip-path: polygon(0 0, 100% 0, 50% 100%); }
.a.lf::before { width: 9px; height: 14px; clip-path: polygon(100% 0, 100% 100%, 0 50%); }
.a.rt::before { width: 9px; height: 14px; clip-path: polygon(0 0, 100% 50%, 0 100%); }
.a.up { box-shadow: 0 1px #b3b4b5; } .a.dn { box-shadow: 0 -1px #b3b4b5; }
.a.lf { box-shadow: 1px 0 #b3b4b5; } .a.rt { box-shadow: -1px 0 #b3b4b5; }
.corner { border: 1px solid #b9babb; border-width: 0 1px 1px 0; }
.g523 { flex: 523; } .g184 { flex: 184; } .g702 { flex: 702; }
.g1299 { flex: 1299; } .g258 { flex: 258; } .g514 { flex: 514; }
.g403 { flex: 403; } .g662 { flex: 662; } .g143 { flex: 143; }
.g312 { flex: 312; } .g121 { flex: 121; }
.g1092 { flex: 1092; } .g118 { flex: 118; } .g1146 { flex: 1146; } .g48 { flex: 48; }

.btn { display: flex; align-items: center; gap: 4px; height: 78px; padding: 0 24px 0 5px; border: 2px solid #a8a9aa; border-radius: 7px; background: linear-gradient(#fdfdfd, #efefef); font-size: 21px; white-space: nowrap; }
.btn .ic { width: 56px; height: 56px; }
.btn.sq { width: 78px; padding: 0 0 0 9px; flex: none; }
.btn.on { background: #dadada; }
.btn:disabled { border-color: #c8c9ca; }
.btn:disabled .ic { stroke: #707274; }
.btn.big { font-size: 25px; height: 68px; padding-right: 12px; }
.statusbar { display: flex; gap: 10px; height: 100px; padding: 12px 0 0 9px; }
.statusbar .btn { padding-right: 30px; }
.status { display: flex; align-items: center; height: 78px; margin-left: auto; padding-right: 270px; white-space: nowrap; }
.status .ic { width: 50px; height: 50px; margin-right: 9px; }
.s-pos { margin-right: 12px; } .s-zoom { margin-right: 42px; } .s-sel { margin-right: 12px; }

.dock { width: 552px; padding: 0 10px 10px 22px; display: flex; flex-direction: column; position: relative; }
.dock::before { content: ""; position: absolute; left: 8px; top: 732px; width: 2px; height: 34px; background: repeating-linear-gradient(#b5b6b7 0 2px, transparent 2px 5px); }
.dock-head { height: 91px; display: flex; align-items: center; justify-content: space-between; padding: 10px 12px 0 10px; }
.plain { border: 0; background: none; padding: 0; display: flex; }
.plain .ic { width: 40px; height: 40px; }
.tree { flex: 1; min-height: 0; display: grid; grid-template-columns: 1fr 28px; grid-template-rows: 1fr 28px; border: 1px solid #b9babb; background: #eff0f1; margin-bottom: 22px; }
.tree ul { list-style: none; overflow: hidden; padding-top: 1px; }
.tree li { display: flex; align-items: center; gap: 12px; height: 54px; white-space: nowrap; }
.tree li:nth-child(odd) { background: #fcfcfc; }
.tree li .ic { width: 50px; height: 50px; }
.l0 { padding-left: 87px; } .l1 { padding-left: 127px; } .l2 { padding-left: 167px; } .l3 { padding-left: 207px; } .l4 { padding-left: 247px; }
.it, .sys { font-style: italic; }
.sys { color: #f00; }
.tree li.sel { background: #3daee9; color: #fff; }
.tree .sel .ic { opacity: .75; }
.shut::before, .open::before { content: ""; flex: none; width: 8px; height: 16px; margin: 0 10px 0 -30px; background: #6e7072; clip-path: polygon(0 0, 100% 50%, 0 100%); }
.open::before { width: 16px; height: 8px; margin: 0 6px 0 -34px; clip-path: polygon(0 0, 100% 0, 50% 100%); }
.dock-row { display: flex; justify-content: flex-end; gap: 10px; margin-bottom: 20px; }
.dock-row:last-child { margin-bottom: 0; }
.dock-row .btn:not(.sq) { padding-right: 30px; }

.dialog { position: absolute; left: 770px; top: 0; width: 1300px; height: 1457px; display: flex; flex-direction: column; background: #eff0f1; border: 1px solid #111; border-radius: 20px; overflow: hidden; box-shadow: 0 36px 90px #000000a6; }
.titlebar { height: 56px; flex: none; display: flex; align-items: center; gap: 16px; padding: 0 15px 2px; background: #3b3a38; border-bottom: 2px solid #000; border-top: 1px solid #777; }
.titlebar i { width: 24px; height: 24px; border-radius: 50%; }
.titlebar .c1 { background: #ec6a5e; } .titlebar .c2 { background: #5a5a58; } .titlebar .c3 { background: #61c454; }
.titlebar h1 { flex: 1; text-align: center; margin-right: 120px; color: #b5b5b3; font-weight: 700; font-size: 26px; }
.dlg-body { flex: 1; min-height: 0; display: flex; flex-direction: column; padding: 9px 10px 0 9px; }
.area { flex: 1; min-height: 0; border: 1px solid #bcbdbe; display: grid; grid-template-columns: 1fr 28px; grid-template-rows: 1fr 28px; }
.port { overflow: hidden; }
.form { width: 1290px; height: 100%; padding: 11px 0 0 11px; display: flex; flex-direction: column; gap: 10px; }
.row { display: flex; align-items: center; gap: 10px; flex: none; }
.row > label:first-child { width: 140px; margin-right: -10px; }
.req { font-weight: 700; font-size: 26px; white-space: nowrap; }
.req::before { content: "* "; color: #f00; font-size: 22px; }
.edit { flex: 1; height: 48px; display: flex; align-items: center; border: 2px solid #a8a9aa; border-radius: 6px; background: #fcfcfc; padding: 0 10px 0 4px; box-shadow: inset 0 2px #eee; }
.edit.must { height: 52px; border: 4px solid #ffbfbf; border-radius: 8px; box-shadow: none; }
.edit input { flex: 1; min-width: 0; border: 0; padding: 0; background: none; outline: 0; }
.edit .ic { width: 32px; height: 26px; }
.r-name { height: 52px; } .r-pick { height: 78px; }
.r-name strong { width: 110px; font-weight: 700; font-size: 26px; white-space: nowrap; }
.gearic { width: 50px; height: 50px; }
.r-comment { height: 160px; }
.r-comment textarea { flex: 1; height: 160px; border: 1px solid #b3b4b5; background: #fcfcfc; resize: none; }
.r-actions { height: 68px; justify-content: flex-end; }
.r-actions label { white-space: nowrap; width: 216px; }
.r-actions input { appearance: none; width: 30px; height: 30px; border: 2px solid #a0a1a2; background: #fff; display: grid; place-items: center; }
.r-actions input::before { content: ""; width: 22px; height: 24px; background: #000; clip-path: polygon(0 55%, 16% 46%, 32% 72%, 82% 0, 100% 2%, 36% 100%, 26% 100%); }

.tabs { flex: none; display: flex; align-items: flex-end; height: 64px; border-bottom: 2px solid #a8a9aa; }
.tabs button { height: 60px; display: flex; align-items: center; gap: 8px; padding: 0 26px 0 22px; border: 2px solid #bbbcbd; border-bottom: 0; border-radius: 6px 6px 0 0; background: #e8e9e9; margin-left: -2px; margin-bottom: -1px; }
.tabs button:first-child { margin-left: 0; }
.tabs .ic { width: 44px; height: 44px; }
.tabs .cur { height: 66px; padding: 0 22px 4px 22px; background: #fcfcfc; border-color: #a8a9aa; margin-bottom: -2px; position: relative; }
.pane { flex: 1; min-height: 0; margin: -10px 0 0; border-left: 2px solid #b3b4b5; background: #fcfcfc; padding: 14px 12px 0 12px; display: flex; flex-direction: column; }
.pane h4 { line-height: 36px; }
.group { margin: 4px 0 0 2px; height: 136px; flex: none; border: 2px solid #e4e4e4; border-radius: 4px; background: #f9f9f9; padding: 12px 0 0 13px; display: flex; flex-direction: column; gap: 10px; overflow: hidden; }
.grow { display: flex; align-items: center; gap: 10px; height: 48px; }
.gl { width: 119px; margin-right: -10px; flex: none; }
.combo { width: 615px; height: 48px; flex: none; position: relative; }
.combo select { appearance: none; width: 100%; height: 48px; border: 2px solid #a8a9aa; border-radius: 6px; background: linear-gradient(90deg, #fcfcfc 572px, #b3b4b5 572px, #b3b4b5 573px, #f3f3f3 573px); padding: 0 6px; }
.combo::after { content: ""; position: absolute; right: 15px; top: 20px; width: 15px; height: 9px; background: #6e7072; clip-path: polygon(0 0, 100% 0, 50% 100%); }
.nl { width: 46px; margin-right: -6px; flex: none; white-space: nowrap; }
.spin { width: 119px; height: 44px; display: flex; border: 2px solid #a8a9aa; border-radius: 6px; background: #fcfcfc; overflow: hidden; flex: none; margin-right: -6px; }
.spin.short { width: 80px; }
.spin input { flex: 1; min-width: 0; border: 0; padding: 0 8px; background: none; }
.spin em { width: 28px; border-left: 2px solid #b3b4b5; background: #f6f6f6; position: relative; }
.spin em::before, .spin em::after { content: ""; position: absolute; left: 6px; top: 8px; width: 15px; height: 9px; background: #6e7072; clip-path: polygon(50% 0, 100% 100%, 0 100%); }
.spin em::after { top: 25px; background: #b0b1b2; clip-path: polygon(0 0, 100% 0, 50% 100%); }
.spin.dis { background: #eff0f1; color: #7a7c7e; }
.spin.dis em::before { background: #a0a1a2; } .spin.dis em::after { background: #cdcecf; }
.fmt { flex: 1; height: 47px; border: 1px solid #b3b4b5; background: #fcfcfc; padding: 2px 10px; font: italic 700 26px/32px "Liberation Serif", serif; color: #ec9412; }
.bar { display: flex; justify-content: center; gap: 10px; margin: 12px 0 10px; }
.grid-box { flex: 1; border: 1px solid #b3b4b5; border-bottom: 0; }
.grid-box table { width: 100%; border-collapse: collapse; }
th { height: 40px; padding: 0 5px; border-bottom: 2px solid #a8a9aa; background: linear-gradient(#fdfdfd, #ececec); font-size: 22px; font-weight: 500; text-align: left; }
th .ic { width: 32px; height: 32px; vertical-align: middle; margin-right: 5px; }
td { height: 61px; padding: 0 7px; border-bottom: 2px solid #c8c9ca; }

.dlg-foot { height: 96px; flex: none; display: flex; align-items: flex-start; gap: 10px; padding-top: 15px; }
.dlg-foot .btn { height: 72px; }
.dlg-foot .def { border-color: #56b4ea; background: linear-gradient(#fdfdfd, #e4eef3); padding: 0 20px 0 9px; }
.logo { margin-right: auto; font: 61px/64px "DejaVu Sans Mono", monospace; color: #fff; -webkit-text-stroke: 4px #aaa; paint-order: stroke; text-shadow: 3px 4px 3px #0006; }
```
